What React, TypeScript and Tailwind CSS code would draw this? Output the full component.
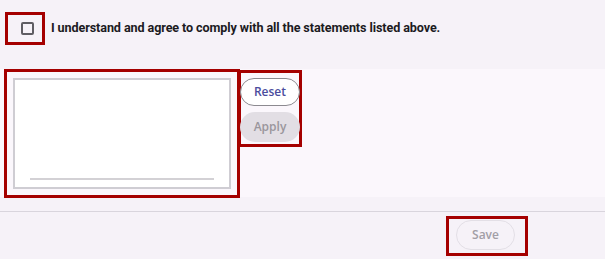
import { useState } from 'react'

const mark = 'border-[3px] border-[#a50000]'
const btnFont = "[font-family:'Open_Sans',sans-serif]"

export default function App() {
  const [agreed, setAgreed] = useState(false)

  return (
    <div className="w-[605px] h-[259px] bg-[#f6f2f8] font-['Roboto',sans-serif] text-[#1c1b1f] flex flex-col overflow-hidden">
      {/* agreement */}
      <div className="flex items-start h-[69px] pl-[5px] pt-[12px]">
        <label className={`${mark} shrink-0 w-[40px] h-[33px] flex items-center justify-center pl-[4px] cursor-pointer`}>
          <input
            type="checkbox"
            checked={agreed}
            onChange={(e) => setAgreed(e.target.checked)}
            className="appearance-none w-[13px] h-[13px] border-2 border-[#5f5d63] rounded-[2px] bg-transparent"
          />
        </label>
        <span className="ml-[6px] mt-[7px] text-[12.6px] leading-[18px] font-bold tracking-[-0.1px]">
          I understand and agree to comply with all the statements listed above.
        </span>
      </div>

      {/* signature */}
      <div className="bg-[#fbf7fc] h-[128px] flex items-start pl-[4px]">
        <div className={`${mark} shrink-0 w-[236px] h-[129px] p-[6px]`}>
          <div className="h-full border-2 border-[#cfcdd3] bg-white flex flex-col justify-end items-center pb-[7px]">
            <div className="w-[184px] h-[2px] bg-[#d3d1d5]" />
          </div>
        </div>
        <div className={`${mark} shrink-0 w-[64px] h-[77px] mt-[1px] -ml-[2px] flex flex-col gap-[6px] pt-[5px]`}>
          <button className={`${btnFont} h-[28px] w-[60px] -ml-[1px] rounded-full border border-[#8c8a90] bg-white text-[12px] font-semibold text-[#4b4c9d]`}>
            Reset
          </button>
          <button className={`${btnFont} h-[30px] w-[60px] -ml-[1px] rounded-full bg-[#e2dee4] text-[12px] font-semibold text-[#9a969c]`}>
            Apply
          </button>
        </div>
      </div>

      {/* footer */}
      <div className="mt-[14px] border-t border-[#d9d5dd] flex justify-start pl-[446px] pt-[4px]">
        <div className={`${mark} shrink-0 w-[82px] h-[40px] flex items-start justify-center pt-[1px] pr-[3px]`}>
          <button
            disabled
            className={`${btnFont} h-[30px] w-[59px] rounded-full border border-[#e3dfe6] text-[12px] font-semibold text-[#a29ea6]`}
          >
            Save
          </button>
        </div>
      </div>
    </div>
  )
}
